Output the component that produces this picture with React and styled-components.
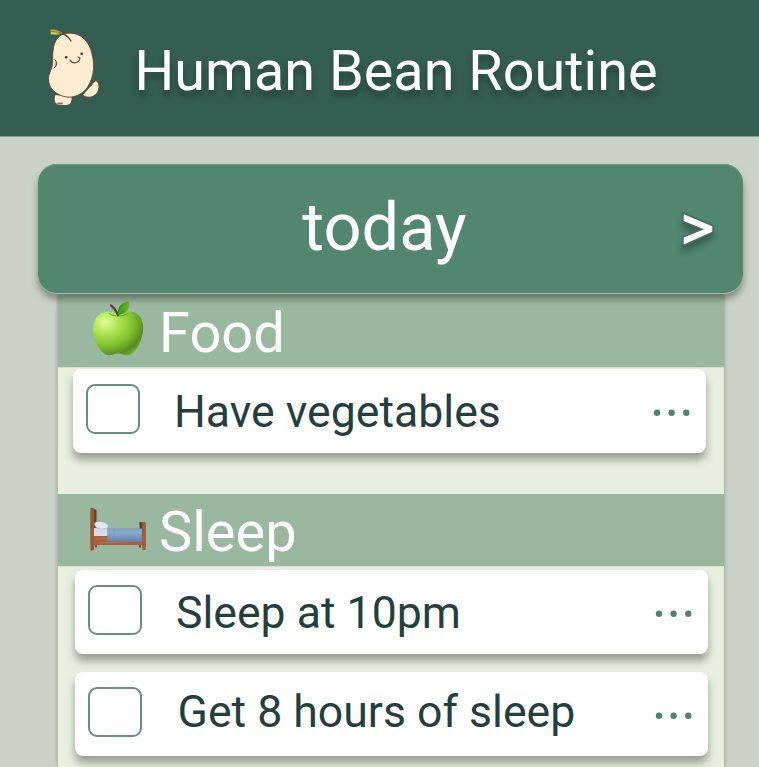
import React from "react";
import styled, { createGlobalStyle } from "styled-components";

const GlobalStyle = createGlobalStyle`
  * { box-sizing: border-box; }
  html, body { margin: 0; height: 100%; overflow: hidden; background: #cad2c7; }
  body { font-family: Roboto, "Liberation Sans", sans-serif; }
`;

const Page = styled.div`
  width: 759px;
  height: 767px;
  overflow: hidden;
  background: #cad2c7;
`;

const Header = styled.header`
  display: flex;
  align-items: flex-start;
  height: 136px;
  background: #355e52;
  box-shadow: 0 1px 0 #8ca295;
`;

const Mascot = styled.svg`
  flex: none;
  width: 100px;
  height: 100px;
  margin: 15px 0 0 30px;
`;

const Title = styled.h1`
  margin: 37px 0 0 4.5px;
  color: #fff;
  font-size: 55.8px;
  font-weight: 400;
  line-height: 68px;
  white-space: nowrap;
  text-shadow: 0 6px 6px rgba(0, 0, 0, 0.3);
`;

const Main = styled.main`
  display: flex;
  flex-direction: column;
  padding: 28px 16px 0 38px;
`;

const DayBar = styled.div`
  position: relative;
  z-index: 1;
  display: grid;
  grid-template-columns: 92px 1fr 92px;
  align-items: center;
  height: 129px;
  border-radius: 19px;
  background: #52866f;
  box-shadow: 0 1px 0 #a9b9aa, 0 6px 7px rgba(0, 0, 0, 0.36), inset 0 1px 0 #6c9780;
`;

const DayName = styled.h2`
  grid-column: 2;
  margin: 0 0 4px -12px;
  color: #fff;
  font-size: 66.8px;
  font-weight: 400;
  line-height: 80px;
  text-align: center;
`;

const NextButton = styled.button`
  display: flex;
  padding: 0;
  border: 0;
  margin: 0 0 0 21px;
  background: none;
`;

const NextIcon = styled.svg`
  width: 60px;
  height: 60px;
  filter: drop-shadow(0 6px 3px rgba(0, 0, 0, 0.3));
`;

const List = styled.div`
  height: 474px;
  margin: 0 19px 0 20px;
  background: #e7f0e0;
  box-shadow: 0 1px 4px rgba(0, 0, 0, 0.3);
`;

const Category = styled.div`
  display: flex;
  height: ${(p) => p.$height}px;
  margin-top: ${(p) => p.$gap || 0}px;
  padding-left: 25px;
  background: #9ab79f;
  box-shadow: 0 1px 0 #d2e0ce;
`;

const CategoryIcon = styled.svg`
  flex: none;
  width: 70px;
  height: 70px;
`;

const CategoryName = styled.h3`
  margin: ${(p) => p.$top}px 0 0 6px;
  color: #fff;
  font-size: 56px;
  font-weight: 400;
  line-height: 66px;
`;

const Task = styled.div`
  display: flex;
  align-items: flex-start;
  width: 633px;
  height: 84px;
  margin: ${(p) => p.$top}px 0 0 ${(p) => p.$left}px;
  padding: 15px 14px 0 13px;
  border-radius: 8px;
  background: #fff;
  box-shadow: 0 7px 8px rgba(0, 0, 0, 0.34);
`;

const Checkbox = styled.span`
  flex: none;
  width: 54px;
  height: 50px;
  border: 2px solid #64927f;
  border-radius: 9px;
`;

const TaskName = styled.span`
  flex: 1;
  margin: ${(p) => p.$top}px 0 0 ${(p) => p.$left}px;
  color: #243f3e;
  font-size: 44.6px;
  line-height: 54px;
  white-space: nowrap;
`;

const More = styled.svg`
  flex: none;
  width: 40px;
  height: 10px;
  margin-top: 24px;
  fill: #4f846e;
`;

function Bean() {
  return (
    <Mascot viewBox="0 0 100 100" fill="none" stroke="#68453a" strokeWidth="1" strokeLinecap="round" strokeLinejoin="round">
      <path fill="#ffedd1" d="M25 80C23 84 24 89 29 90.5H37Q43 89 42 82M53 80Q55 83 61 82C68 80 70 74 68.5 68L66 65.5Q63 67 61 71" />
      <path fill="#ffedd1" d="M34 18.8C45 16 56 21 61 35C65 48 65 61 57 73C50 82 38 85 28 79C20 75 16 66 20 57C24 49 22 43 23 36C24 27 27 21 34 18.8Z" />
      <path d="M25 45C28 47 27 51 24 53" fill="#e9a583" />
      <path d="M67.2 64.5L67.8 67" />
      <path d="M41 26Q37 19 29 18L20 13" strokeWidth="1.3" />
      <path fill="#bdcf48" stroke="#768137" strokeWidth=".8" d="M20.5 14.5Q27 14 32 18Q27 21 21 19.5Z" />
      <path d="M21 16L31 18" strokeWidth=".6" />
      <path d="M40 45C42 49 49 49 50 43L48 42" strokeWidth="1.2" />
      <g fill="#4b302a" stroke="none">
        <circle cx="36.2" cy="42.3" r="1.3" />
        <circle cx="51.7" cy="38.7" r="1.3" />
      </g>
      <path d="M28 88.5L32 88.5" stroke="#668177" strokeWidth="1.8" />
      <path d="M44 90.7h.3" />
    </Mascot>
  );
}

function Apple() {
  return (
    <CategoryIcon viewBox="0 0 70 70">
      <defs>
        <radialGradient id="apple" cx=".25" cy=".24" r=".9">
          <stop offset="0" stopColor="#dfff94" />
          <stop offset=".28" stopColor="#b1e554" />
          <stop offset=".6" stopColor="#80c42d" />
          <stop offset=".86" stopColor="#588a22" />
          <stop offset="1" stopColor="#78b62f" />
        </radialGradient>
        <linearGradient id="leaf">
          <stop stopColor="#2b9018" />
          <stop offset="1" stopColor="#68b91d" />
        </linearGradient>
      </defs>
      <path fill="url(#apple)" d="M34.5 21C41 18 48 17 54 21C61 26 61.5 36 58.5 45C56 54 50.5 61 46.5 62C41.5 63 40 60 35 60.5C31 60 28 64 23 61.5C15 57 8.5 43 10.5 33C12 19 24 16 34.5 21Z" />
      <path d="M26 20.5Q35 26 45 20.5" fill="none" stroke="#578f20" strokeWidth="1.2" opacity=".65" />
      <path d="M28 12.5Q32 15 35 22" fill="none" stroke="#633b32" strokeWidth="2.2" strokeLinecap="round" />
      <path fill="url(#leaf)" d="M35 22C34 14 38 9 46 8.5C47 16 43 21 35 22Z" />
      <path d="M36 20L43 11" stroke="#82bd37" strokeWidth=".6" />
    </CategoryIcon>
  );
}

function Bed() {
  return (
    <CategoryIcon viewBox="0 0 70 70">
      <defs>
        <linearGradient id="blanket" x2="0" y2="1">
          <stop stopColor="#7598bd" />
          <stop offset=".2" stopColor="#8db0d1" />
          <stop offset="1" stopColor="#6084b1" />
        </linearGradient>
        <linearGradient id="wood">
          <stop stopColor="#995635" />
          <stop offset=".6" stopColor="#bd774b" />
          <stop offset="1" stopColor="#9c5d3d" />
        </linearGradient>
      </defs>
      <path d="M10.5 14.5L13.5 16V31L11 50H10V16Z" fill="#69402f" />
      <path d="M11 34H24V43H11Z" fill="#d6dce8" />
      <ellipse cx="18.2" cy="31.2" rx="7" ry="3.3" fill="#e4e7f0" transform="rotate(10 18 31)" />
      <path d="M12 34Q18 36 25 34" fill="none" stroke="#acb8cc" strokeWidth=".7" />
      <path fill="#633d32" d="M56.5 28L62.5 28.5V52H59V48H56.5Z" />
      <path fill="#a7613d" d="M11 42H60V51H11Z" />
      <path stroke="#c1774a" strokeWidth=".8" d="M13 45L59 44M15 49L58 47" />
      <path fill="url(#blanket)" d="M24.5 34.5H59V47.5H24.5Z" />
      <path fill="none" stroke="#6687ad" d="M25 37H59M31 34.5V47" strokeWidth=".3" />
      <path fill="#7d4934" d="M12 51H14V53.5H12ZM56 51H58V53.5H56Z" />
      <path fill="url(#wood)" d="M7.3 14.5Q9 13 11 14.5V56Q9.5 57 7.3 56ZM59.3 28.5Q61.5 27 62.7 28.5V56H59.3Z" />
    </CategoryIcon>
  );
}

function TaskRow({ name, top, left, textLeft, textTop, id }) {
  return (
    <Task $top={top} $left={left}>
      <Checkbox role="checkbox" aria-checked="false" aria-labelledby={id} />
      <TaskName id={id} $left={textLeft} $top={textTop}>{name}</TaskName>
      <More viewBox="0 0 40 10">
        <circle cx="5" cy="4.8" r="3.2" />
        <circle cx="19.6" cy="4.8" r="3.2" />
        <circle cx="34.3" cy="4.8" r="3.2" />
      </More>
    </Task>
  );
}

export default function App() {
  return (
    <Page>
      <GlobalStyle />
      <Header>
        <Bean />
        <Title>Human Bean Routine</Title>
      </Header>
      <Main>
        <DayBar>
          <DayName>today</DayName>
          <NextButton aria-label="Next day">
            <NextIcon viewBox="0 0 60 60">
              <path d="M11.7 15.2L40.3 27.2V32.8L11.7 45.6V38.6L32 30.2L11.7 22Z" fill="#fff" stroke="#3f6d5b" strokeWidth="3" paintOrder="stroke" />
            </NextIcon>
          </NextButton>
        </DayBar>
        <List>
          <Category $height={74}>
            <Apple />
            <CategoryName $top={7}>Food</CategoryName>
          </Category>
          <TaskRow id="vegetables" name="Have vegetables" top={2} left={15} textLeft={34} textTop={1} />
          <Category $height={72.5} $gap={40.5}>
            <Bed />
            <CategoryName $top={5.5}>Sleep</CategoryName>
          </Category>
          <TaskRow id="bedtime" name="Sleep at 10pm" top={4} left={17} textLeft={34} textTop={1} />
          <TaskRow id="duration" name="Get 8 hours of sleep" top={18} left={17} textLeft={35.5} textTop={-2} />
        </List>
      </Main>
    </Page>
  );
}
